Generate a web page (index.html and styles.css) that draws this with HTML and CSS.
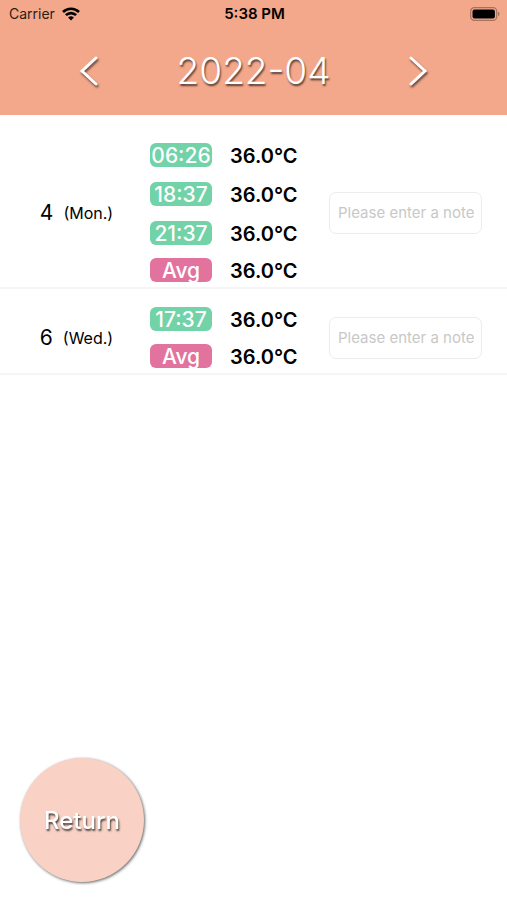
FILE: index.html
```html
<!DOCTYPE html>
<html lang="en">
<head>
  <meta charset="UTF-8" />
  <meta name="viewport" content="width=device-width, initial-scale=1" />
  <title>Temperature Log</title>
  <link rel="stylesheet" href="styles.css">
</head>
<body>
  <header class="header">
    <!-- Status bar -->
    <div class="status-bar">
      <div class="carrier">
        <span>Carrier</span>
        <svg class="wifi" viewBox="0 0 18 14" width="18" height="14" aria-hidden="true">
          <path d="M1 5a11.4 11.4 0 0 1 16 0" />
          <path d="M3.9 8.2a7.2 7.2 0 0 1 10.2 0" />
          <path class="wifi-dot" d="M9 13.6l-2.9-3a4.2 4.2 0 0 1 5.8 0z" />
        </svg>
      </div>
      <div class="clock">5:38 PM</div>
      <svg class="battery" viewBox="0 0 30 14" width="30" height="14" aria-hidden="true">
        <rect class="battery-case" x="0.7" y="0.7" width="26" height="12.6" rx="3.6" />
        <rect x="2.5" y="2.5" width="22.4" height="9" rx="2" />
        <path class="battery-tip" d="M28 4.8c2 .6 2 3.8 0 4.4z" />
      </svg>
    </div>

    <!-- Month picker -->
    <div class="month-bar">
      <button class="arrow" type="button" aria-label="Previous month">
        <svg viewBox="0 0 20 30" width="20" height="30"><path d="M17 2L3 15l14 13" /></svg>
      </button>
      <h1>2022-04</h1>
      <button class="arrow" type="button" aria-label="Next month">
        <svg viewBox="0 0 20 30" width="20" height="30"><path d="M3 2l14 13L3 28" /></svg>
      </button>
    </div>
  </header>

  <main class="days">
    <section class="day-row">
      <div class="date"><span class="day">4</span><span class="weekday">(Mon.)</span></div>
      <ul class="readings">
        <li><span class="tag">06:26</span><span class="temp">36.0°C</span></li>
        <li><span class="tag">18:37</span><span class="temp">36.0°C</span></li>
        <li><span class="tag">21:37</span><span class="temp">36.0°C</span></li>
        <li class="average"><span class="tag">Avg</span><span class="temp">36.0°C</span></li>
      </ul>
      <input class="note" type="text" placeholder="Please enter a note" aria-label="Note for Monday 4">
    </section>

    <section class="day-row">
      <div class="date"><span class="day">6</span><span class="weekday">(Wed.)</span></div>
      <ul class="readings">
        <li><span class="tag">17:37</span><span class="temp">36.0°C</span></li>
        <li class="average"><span class="tag">Avg</span><span class="temp">36.0°C</span></li>
      </ul>
      <input class="note" type="text" placeholder="Please enter a note" aria-label="Note for Wednesday 6">
    </section>
  </main>

  <button class="return-btn" type="button">Return</button>
</body>
</html>
```
FILE: styles.css
```css
* {
  box-sizing: border-box;
}
body {
  margin: 0;
  font-family: Inter, 'Liberation Sans', sans-serif;
  background: #fff;
  color: #000;
}
.header {
  background: #f4a88b;
  padding-bottom: 20px;
}
.status-bar {
  display: grid;
  grid-template-columns: 1fr auto 1fr;
  align-items: center;
  height: 27px;
  padding: 0 7px 0 9px;
  font-size: 14px;
}
.carrier {
  display: flex;
  align-items: center;
  gap: 7px;
  color: #2b1d18;
}
.wifi {
  fill: none;
  stroke: #000;
  stroke-width: 2.6;
}
.wifi-dot {
  fill: #000;
  stroke: none;
}
.clock {
  font-size: 15px;
  font-weight: 600;
}
.battery {
  justify-self: end;
}
.battery-case {
  fill: none;
  stroke: #a5725e;
  stroke-width: 1.2;
}
.battery-tip {
  fill: #a5725e;
}
.month-bar {
  display: grid;
  grid-template-columns: 1fr auto 1fr;
  align-items: center;
  justify-items: center;
  height: 68px;
  padding: 20px 2px 0;
}
.month-bar h1 {
  margin: 0;
  font-size: 37px;
  font-weight: 300;
  line-height: 48px;
  color: #fff;
  text-shadow: 1px 2px 2px rgba(0, 0, 0, 0.65);
}
.arrow {
  display: flex;
  padding: 0;
  border: none;
  background: none;
  cursor: pointer;
}
.arrow svg {
  fill: none;
  stroke: #fff;
  stroke-width: 3;
  stroke-linecap: round;
  filter: drop-shadow(1px 2px 1px rgba(0, 0, 0, 0.6));
}
.days {
  padding-top: 10px;
}
.day-row {
  display: grid;
  grid-template-columns: 150px 179px 1fr;
  align-items: center;
  padding: 18px 25px 5px 0;
  border-bottom: 2px solid #f5f5f5;
}
.date {
  display: flex;
  align-items: center;
  justify-content: center;
  gap: 10px;
  padding-left: 3px;
}
.day {
  font-size: 21px;
}
.weekday {
  font-size: 16px;
}
.readings {
  display: grid;
  gap: 15px;
  margin: 0;
  padding: 0;
  list-style: none;
}
.readings li {
  display: flex;
  gap: 18px;
  height: 24px;
  font-size: 20px;
  line-height: 26px;
}
.readings .average {
  margin-top: -2px;
}
.tag {
  width: 62px;
  border-radius: 6px;
  background: #72d2a8;
  color: #fff;
  font-size: 21px;
  font-weight: 500;
  text-align: center;
}
.average .tag {
  background: #e2739e;
}
.temp {
  font-weight: 600;
}
.note {
  width: 100%;
  height: 42px;
  padding: 0 7px 0 8px;
  border: 1px solid #ececec;
  border-radius: 7px;
  background: #fff;
  font-family: inherit;
  font-size: 15px;
}
.note::placeholder {
  color: #c8c8c8;
}
/* floats over the list */
.return-btn {
  position: fixed;
  left: 20px;
  bottom: 18px;
  width: 124px;
  height: 124px;
  padding: 0;
  border: none;
  border-radius: 50%;
  background: #f9d2c5;
  box-shadow: 1px 1px 3px rgba(0, 0, 0, 0.6);
  color: #fff;
  font-family: inherit;
  font-size: 24px;
  font-weight: 500;
  text-shadow: 1px 2px 2px rgba(0, 0, 0, 0.7);
  cursor: pointer;
}
```
